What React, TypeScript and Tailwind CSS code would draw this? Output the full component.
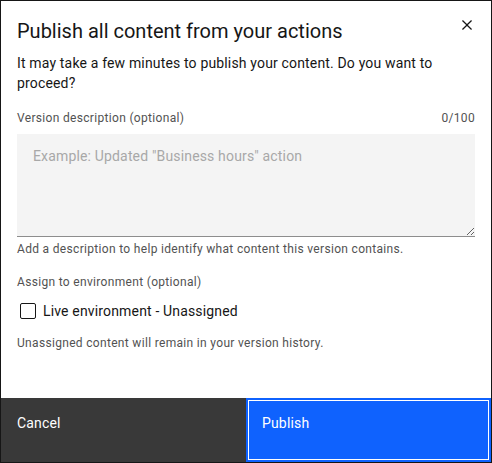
import { useState } from 'react';

const font = { fontFamily: 'Roboto, "Noto Sans", sans-serif' };

function CloseIcon() {
  return (
    <svg width="20" height="20" viewBox="0 0 32 32" fill="#161616" aria-hidden="true">
      <path d="M17.4141 16L24 9.4141 22.5859 8 16 14.5859 9.4143 8 8 9.4141 14.5859 16 8 22.5859 9.4143 24 16 17.4141 22.5859 24 24 22.5859 17.4141 16z" />
    </svg>
  );
}

export default function App() {
  const [description, setDescription] = useState('');
  const [live, setLive] = useState(false);

  return (
    <div className="w-[492px] h-[463px] bg-white border border-[#161616] flex flex-col" style={font}>
      {/* Header */}
      <div className="relative pt-4 pl-4 pr-12">
        <h2 className="text-[20px] leading-[28px] text-[#161616] font-normal">
          Publish all content from your actions
        </h2>
        <button className="absolute top-0 right-0 w-12 h-12 flex items-center justify-center">
          <CloseIcon />
        </button>
      </div>

      {/* Contenu */}
      <div className="flex-1 px-4">
        <p className="mt-2 w-[440px] text-[14px] leading-[20px] tracking-[0.16px] text-[#161616]">
          It may take a few minutes to publish your content. Do you want to proceed?
        </p>

        <div className="mt-[17px] flex justify-between text-[12px] leading-[16px] tracking-[0.32px] text-[#525252]">
          <span>Version description (optional)</span>
          <span>{description.length}/100</span>
        </div>

        <textarea
          value={description}
          onChange={(e) => setDescription(e.target.value.slice(0, 100))}
          placeholder='Example: Updated "Business hours" action'
          rows={4}
          className="mt-2 block w-full h-[103px] resize-y bg-[#f4f4f4] border-b border-[#8d8d8d] px-4 pt-[12px] pb-[10px] text-[14px] leading-[20px] tracking-[0.16px] text-[#161616] placeholder:text-[#a8a8a8] outline-none"
        />

        <p className="mt-1 text-[12px] leading-[16px] tracking-[0.32px] text-[#525252]">
          Add a description to help identify what content this version contains.
        </p>

        <p className="mt-[17px] text-[12px] leading-[16px] tracking-[0.32px] text-[#525252]">
          Assign to environment (optional)
        </p>

        <label className="mt-[9px] h-6 flex items-center cursor-pointer">
          <span
            onClick={() => setLive(!live)}
            className={`ml-[3px] w-4 h-4 border border-[#161616] rounded-[2px] ${live ? 'bg-[#161616]' : 'bg-white'}`}
          />
          <span className="ml-[7px] text-[14px] leading-[20px] tracking-[0.16px] text-[#161616]">
            Live environment - Unassigned
          </span>
        </label>

        <p className="mt-3 text-[12px] leading-[16px] tracking-[0.32px] text-[#525252]">
          Unassigned content will remain in your version history.
        </p>
      </div>

      {/* Boutons */}
      <div className="h-16 flex">
        <button className="w-1/2 h-full bg-[#393939] text-white text-left pl-4 pt-4 flex items-start text-[14px] leading-[18px] tracking-[0.16px]">
          Cancel
        </button>
        <button className="w-1/2 h-full bg-[#0f62fe] text-white text-left pl-[14px] pt-[14px] flex items-start text-[14px] leading-[18px] tracking-[0.16px] border-2 border-[#0f62fe] shadow-[inset_0_0_0_1px_#ffffff]">
          Publish
        </button>
      </div>
    </div>
  );
}
